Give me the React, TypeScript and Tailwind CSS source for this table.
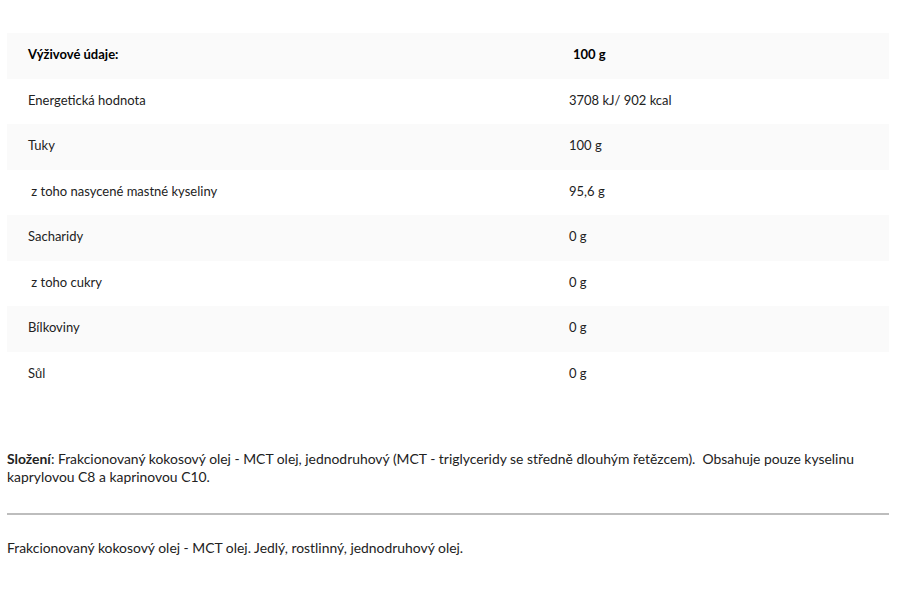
import React from "react";

const rows: [string, string][] = [
  ["Energetická hodnota", "3708 kJ/ 902 kcal"],
  ["Tuky", "100 g"],
  ["\u00a0z toho nasycené mastné kyseliny", "95,6 g"],
  ["Sacharidy", "0 g"],
  ["\u00a0z toho cukry", "0 g"],
  ["Bílkoviny", "0 g"],
  ["Sůl", "0 g"],
];

export default function App() {
  return (
    <div
      className="w-[900px] h-[600px] bg-white text-[#222] text-[13px] pl-[7px] pt-[33px]"
      style={{ fontFamily: "Lato, 'Open Sans', sans-serif" }}
    >
      <div className="w-[882px]">
        <div className="flex h-[45.5px] items-center pb-[2px] bg-[#fafafa] font-bold text-black">
          <div className="w-[541px] pl-[21px]">Výživové údaje:</div>
          <div className="pl-[25px]">100 g</div>
        </div>
        {rows.map(([l, v], i) => (
          <div
            key={i}
            className={`flex h-[45.5px] items-center pb-[2px] ${i % 2 === 1 ? "bg-[#fafafa]" : "bg-white"}`}
          >
            <div className="w-[541px] pl-[21px]">{l}</div>
            <div className="pl-[21px]">{v}</div>
          </div>
        ))}
        <p className="mt-[53px] leading-[18px] text-[13.9px]">
          <span className="font-bold">Složení</span>: Frakcionovaný kokosový olej - MCT olej, jednodruhový (MCT - triglyceridy se středně dlouhým řetězcem).&nbsp; Obsahuje pouze kyselinu
          <br />
          kaprylovou C8 a kaprinovou C10.
        </p>
        <div className="mt-[27px] h-[2px] bg-[#bdbdbd]" />
        <p className="mt-[24px] leading-[18px] text-[13.9px]">
          Frakcionovaný kokosový olej - MCT olej. Jedlý, rostlinný, jednodruhový olej.
        </p>
      </div>
    </div>
  );
}
